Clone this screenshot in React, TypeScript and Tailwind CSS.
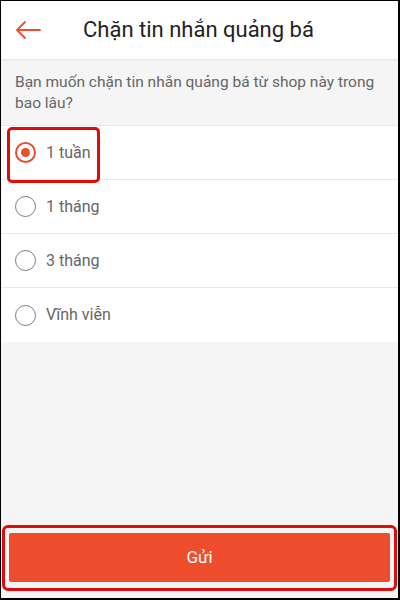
import React, { useState } from 'react';

const options = ['1 tuần', '1 tháng', '3 tháng', 'Vĩnh viễn'];

function Radio({ checked }: { checked: boolean }) {
  return checked ? (
    <span className="w-[21px] h-[21px] rounded-full border-2 border-[#ee4d2d] flex items-center justify-center">
      <span className="w-[9px] h-[9px] rounded-full bg-[#ee4d2d]" />
    </span>
  ) : (
    <span className="w-[21px] h-[21px] rounded-full border-[1.5px] border-[#7a7a7a]" />
  );
}

export default function App() {
  const [selected, setSelected] = useState(0);

  return (
    <div
      className="relative w-[400px] h-[600px] flex flex-col bg-[#f5f5f5] border-l border-t border-r-2 border-b-2 border-black overflow-hidden"
      style={{ fontFamily: 'Roboto, "Noto Sans", sans-serif' }}
    >
      {/* Header */}
      <div className="h-[58px] shrink-0 bg-white flex items-center shadow-[0_1px_2px_rgba(0,0,0,0.08)] relative z-10">
        <button className="pl-[14px] pr-[42px] flex items-center">
          <svg width="26" height="18" viewBox="0 0 26 18" fill="none">
            <path d="M25 9H2M10 1L2 9l8 8" stroke="#ee4d2d" strokeWidth="1.8" strokeLinecap="round" strokeLinejoin="round" />
          </svg>
        </button>
        <h1 className="text-[22px] text-[#222] leading-none">Chặn tin nhắn quảng bá</h1>
      </div>

      {/* Question */}
      <p className="px-[14px] pt-[13px] pb-[11px] text-[15.5px] leading-[21px] text-[#666]">
        Bạn muốn chặn tin nhắn quảng bá từ shop này trong bao lâu?
      </p>

      {/* Options */}
      <div className="bg-white border-t border-[#e8e8e8] divide-y divide-[#e8e8e8]">
        {options.map((opt, i) => (
          <div
            key={opt}
            onClick={() => setSelected(i)}
            className="h-[54px] flex items-center gap-[10px] pl-[14px] cursor-pointer"
          >
            <Radio checked={selected === i} />
            <span className="text-[16px] text-[#666]">{opt}</span>
          </div>
        ))}
      </div>

      <div className="flex-1" />

      {/* Submit */}
      <button className="mx-[8px] mb-[16px] h-[49px] rounded-[2px] bg-[#ee4d2d] text-white text-[17px]">
        Gửi
      </button>

      {/* Annotation boxes */}
      <div className="absolute left-[6px] top-[126px] w-[93px] h-[56px] border-[3px] border-[#e00b0b] rounded-[5px] pointer-events-none" />
      <div className="absolute left-[1px] top-[524px] w-[395px] h-[66px] border-[3px] border-[#e00b0b] rounded-[6px] pointer-events-none" />
    </div>
  );
}
